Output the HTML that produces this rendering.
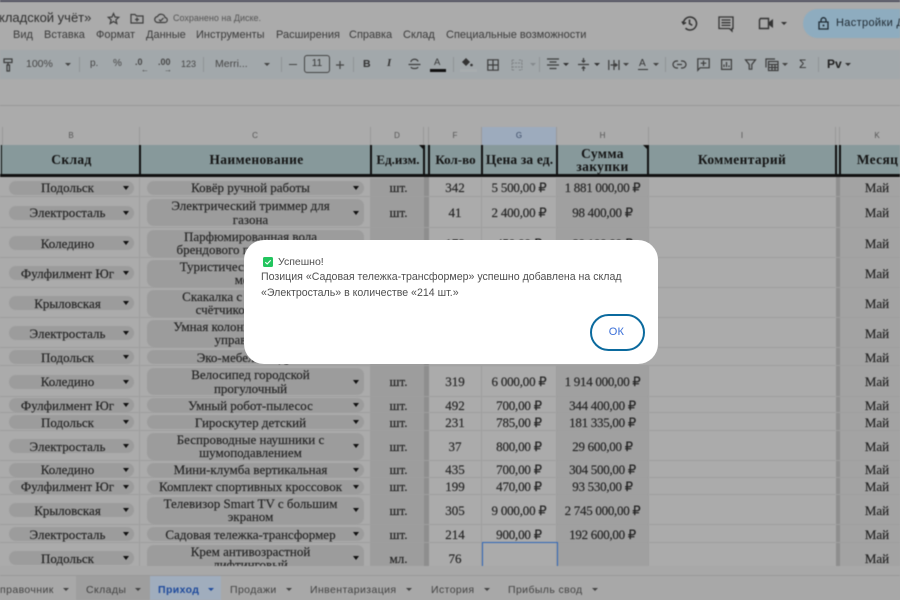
<!DOCTYPE html>
<html lang="ru">
<head>
<meta charset="utf-8">
<title>Складской учёт</title>
<style>
html,body{margin:0;padding:0;width:900px;height:600px;overflow:hidden;background:#ababab}
*{box-sizing:border-box}
#bg{position:absolute;left:0;top:0;width:900px;height:600px;overflow:hidden;filter:blur(.45px);font-family:"Liberation Sans",sans-serif;color:#3d3d3d}
.a{position:absolute;white-space:nowrap}
.m{font-size:11px;top:29px;color:#3a3a3a}
.t{font-size:10px;top:58px;color:#474747}
svg{position:absolute;overflow:visible}
.ic{fill:none;stroke:#3c3c3c;stroke-width:1.2}
.ch{top:127px;height:18px;font-size:8px;line-height:18px;text-align:center;color:#555;border-right:1px solid #999}
.hd{top:145px;height:32px;padding-top:1px;background:#87999b;border-right:2px solid #111;border-bottom:3px solid #111;font:bold 13.5px/13.5px "Liberation Serif",serif;color:#141414;display:flex;align-items:center;justify-content:center;text-align:center;letter-spacing:.35px}
.r{position:absolute;left:0;width:900px;border-bottom:1px solid #9e9e9e;font:13px/13.5px "Liberation Serif",serif;color:#222;-webkit-text-stroke:.15px #222}
.c{position:absolute;top:0;bottom:0;padding-top:1.5px;display:flex;align-items:center;justify-content:center;text-align:center;white-space:nowrap}
.b{left:2px;width:138px;border-right:1px solid #9e9e9e}
.n{left:140px;width:231px;border-right:1px solid #9e9e9e}
.d{left:371px;width:53px;padding-left:2px;background:#9d9d9d}
.f{left:429px;width:53px;border-right:1px solid #9e9e9e}
.g{left:482px;width:75px;border-right:1px solid #9e9e9e;letter-spacing:-.2px}
.h{left:557px;width:92px;background:#a0a0a0;border-right:1px solid #9e9e9e;letter-spacing:-.28px}
.k{left:840px;width:74px;background:#a3a3a3}
.p{position:relative;background:#9c9c9c;border-radius:7px;display:flex;align-items:center;justify-content:center;line-height:13.5px}
.b .p{width:125px;height:14px;padding-right:7px;margin-left:1px}
.n .p{width:217px;min-height:14px;padding:0 10px 0 0;margin-left:1px}
.p:after{content:"";position:absolute;right:5px;top:50%;margin-top:-2px;border:3.5px solid transparent;border-top:4px solid #111;border-bottom:0}
.tab{position:absolute;top:576px;height:24px;line-height:29px;font-size:10.5px;letter-spacing:.4px;color:#424242;white-space:nowrap;padding-left:10px}
.tab i{display:inline-block;margin-left:9px;border:3px solid transparent;border-top:3.5px solid #424242;border-bottom:0;vertical-align:2px}
#modal{position:absolute;left:244px;top:240px;width:414px;height:124px;background:#fff;border-radius:20px;font-family:"Liberation Sans",sans-serif;color:#505050;font-size:10.6px}
</style>
</head>
<body>
<div id="bg">
  <div class="a" style="left:0;top:0;width:900px;height:2px;background:#50505e"></div>

  <div class="a" style="left:-1px;top:10px;font-size:13px;color:#2e2e2e">кладской учёт»</div>
  <svg style="left:107px;top:12px" width="13" height="13" viewBox="0 0 13 13"><path class="ic" d="M6.5 1.5l1.5 3.5 3.7.3-2.8 2.5.9 3.7-3.3-2-3.3 2 .9-3.7L1.3 5.300l3.700-.3z"/></svg>
  <svg style="left:130px;top:13px" width="14" height="11" viewBox="0 0 14 11"><path class="ic" d="M1 1.500h4l1.500 1.500h6.500v7h-12z M7 4.500v4M5 6.500h4"/></svg>
  <svg style="left:154px;top:12px" width="14" height="12" viewBox="0 0 14 12"><path class="ic" d="M4 10.500a3 3 0 0 1-.5-6 4 4 0 0 1 7.500 1 2.500 2.500 0 0 1-.5 5z M5 7.500l1.500 1.500 3-3"/></svg>
  <div class="a" style="left:173px;top:13px;font-size:9px;color:#555">Сохранено на Диске.</div>

  <div class="a m" style="left:13px">Вид</div>
  <div class="a m" style="left:44px">Вставка</div>
  <div class="a m" style="left:96px">Формат</div>
  <div class="a m" style="left:146px">Данные</div>
  <div class="a m" style="left:196px">Инструменты</div>
  <div class="a m" style="left:276px">Расширения</div>
  <div class="a m" style="left:349px">Справка</div>
  <div class="a m" style="left:403px">Склад</div>
  <div class="a m" style="left:446px">Специальные возможности</div>

  <svg style="left:681px;top:15px" width="17" height="17" viewBox="0 0 17 17"><path d="M2.500 8.500a6.500 6.500 0 1 1 2 4.700 M1 6.500l1.500 2.500 2.500-1.500 M8.500 4.500v4.200l2.800 1.600" fill="none" stroke="#333" stroke-width="1.500"/></svg>
  <svg style="left:718px;top:16px" width="16" height="16" viewBox="0 0 16 16"><path d="M1 1h14v11.500h-1v2.500l-2.500-2.500H1z M3.500 4h9M3.500 6.700h9M3.500 9.400h9" fill="none" stroke="#333" stroke-width="1.300"/></svg>
  <svg style="left:758px;top:17px" width="16" height="13" viewBox="0 0 16 13"><path d="M2.500 1.500h8v10h-9v-8.500z" fill="none" stroke="#333" stroke-width="1.400"/><path d="M11 5l4-3v9l-4-3z" fill="#333"/></svg>
  <div class="a" style="left:781px;top:22px;border:3px solid transparent;border-top:3.500px solid #333;border-bottom:0"></div>
  <div class="a" style="left:803px;top:9px;width:110px;height:29px;border-radius:15px;background:#8eacbf"></div>
  <svg style="left:818px;top:17px" width="11" height="13" viewBox="0 0 11 13"><path d="M1 5h9v7H1z M3 5V3.200a2.500 2.500 0 0 1 5 0V5" fill="none" stroke="#1f2a33" stroke-width="1.300"/><circle cx="5.500" cy="8.500" r="1" fill="#1f2a33"/></svg>
  <div class="a" style="left:836px;top:17px;font-size:11px;color:#1f2a33;letter-spacing:.35px">Настройки Д</div>

  <div class="a" style="left:0;top:50px;width:900px;height:29px;background:#a2a8ab"></div>
  <svg style="left:3px;top:58px" width="11" height="14" viewBox="0 0 11 14"><path class="ic" d="M1 1h8v3.500H1z M5 4.500v2.500h-1v6h2.500v-6H5"/></svg>
  <div class="a t" style="left:26px;font-size:10.5px">100%</div>
  <div class="a" style="left:65px;top:63px;border:3px solid transparent;border-top:3.500px solid #444;border-bottom:0"></div>
  <div class="a" style="left:79px;top:57px;width:1px;height:15px;background:#8f9497"></div>
  <div class="a t" style="left:90px">р.</div>
  <div class="a t" style="left:113px">%</div>
  <div class="a t" style="left:135px;font-weight:bold;font-size:9px;top:57px">.0</div>
  <div class="a" style="left:141px;top:65px;font-size:8px;color:#444">←</div>
  <div class="a t" style="left:158px;font-weight:bold;font-size:9px;top:57px">.00</div>
  <div class="a" style="left:164px;top:65px;font-size:8px;color:#444">→</div>
  <div class="a t" style="left:181px;font-size:9px;top:59px">123</div>
  <div class="a" style="left:203px;top:57px;width:1px;height:15px;background:#8f9497"></div>
  <div class="a t" style="left:215px;font-size:10.5px">Merri...</div>
  <div class="a" style="left:264px;top:63px;border:3px solid transparent;border-top:3.500px solid #444;border-bottom:0"></div>
  <div class="a" style="left:281px;top:57px;width:1px;height:15px;background:#8f9497"></div>
  <div class="a" style="left:289px;top:64px;width:8px;height:1.200px;background:#444"></div>
  <div class="a" style="left:304px;top:55px;width:26px;height:18px;border:1px solid #444;border-radius:3px;text-align:center;font-size:10px;line-height:16px;color:#333">11</div>
  <svg style="left:335px;top:60px" width="10" height="10" viewBox="0 0 10 10"><path d="M1 5h8M5 1v8" stroke="#444" stroke-width="1.200"/></svg>
  <div class="a" style="left:353px;top:57px;width:1px;height:15px;background:#8f9497"></div>
  <div class="a" style="left:363px;top:58px;font:bold 10.5px 'Liberation Sans',sans-serif;color:#333">B</div>
  <div class="a" style="left:387px;top:57px;font:italic bold 11px 'Liberation Serif',serif;color:#333">I</div>
  <svg style="left:408px;top:58px" width="13" height="13" viewBox="0 0 13 13"><path class="ic" d="M3 4a3.500 2.500 0 0 1 7 -.5 M0.500 6.500h12 M3 9c.5 2 6.500 2 7 0"/></svg>
  <div class="a" style="left:434px;top:57px;font-size:9.5px;color:#333">A</div>
  <div class="a" style="left:430px;top:69px;width:16px;height:3px;background:#111"></div>
  <div class="a" style="left:453px;top:57px;width:1px;height:15px;background:#8f9497"></div>
  <svg style="left:460px;top:56px" width="13" height="12" viewBox="0 0 13 12"><path d="M2 6L6 2l4 4-4 4z" fill="#333"/><circle cx="11.500" cy="9" r="1.300" fill="#333"/></svg>
  <div class="a" style="left:460px;top:69px;width:17px;height:3px;background:#a8acae"></div>
  <svg style="left:487px;top:59px" width="12" height="12" viewBox="0 0 12 12"><path class="ic" d="M.8.800h10.400v10.400H.8z M6 .8v10.400 M.8 6h10.400"/></svg>
  <svg style="left:511px;top:59px" width="12" height="12" viewBox="0 0 12 12"><path d="M1 1h3M8 1h3M1 4h10M1 8h10M1 11h3M8 11h3M1 1v10M11 1v10" fill="none" stroke="#7f8385" stroke-width="1" stroke-dasharray="2 1"/></svg>
  <div class="a" style="left:530px;top:63px;border:3px solid transparent;border-top:3.500px solid #858a8d;border-bottom:0"></div>
  <div class="a" style="left:539px;top:57px;width:1px;height:15px;background:#8f9497"></div>
  <svg style="left:547px;top:58px" width="12" height="12" viewBox="0 0 12 12"><path class="ic" d="M0 1h12M2.500 4h7M0 7h12M2.500 10.500h7"/></svg>
  <div class="a" style="left:563px;top:63px;border:3px solid transparent;border-top:3.500px solid #333;border-bottom:0"></div>
  <svg style="left:578px;top:58px" width="11" height="13" viewBox="0 0 11 13"><path class="ic" d="M0 6.500h11 M5.500 0v4M3.800 2.500l1.700 1.700 1.700-1.700 M5.500 13V9M3.800 10.500l1.700-1.700 1.700 1.700"/></svg>
  <div class="a" style="left:594px;top:63px;border:3px solid transparent;border-top:3.500px solid #333;border-bottom:0"></div>
  <svg style="left:608px;top:59px" width="12" height="12" viewBox="0 0 12 12"><path class="ic" d="M.8 1v10M11 1v10M6 1v10M2.500 6H9M7 4.500L9 6l-2 1.500" stroke-width=".9"/></svg>
  <div class="a" style="left:623px;top:63px;border:3px solid transparent;border-top:3.500px solid #444;border-bottom:0"></div>
  <div class="a" style="left:639px;top:58px;font-size:10px;color:#333">A</div>
  <div class="a" style="left:638px;top:69px;width:10px;height:1.200px;background:#333"></div>
  <div class="a" style="left:653px;top:63px;border:3px solid transparent;border-top:3.500px solid #444;border-bottom:0"></div>
  <div class="a" style="left:665px;top:57px;width:1px;height:15px;background:#8f9497"></div>
  <svg style="left:673px;top:60px" width="13" height="9" viewBox="0 0 13 9"><path class="ic" d="M5 1H3.500a3.500 3.500 0 0 0 0 7H5M8 1h1.500a3.500 3.500 0 0 1 0 7H8M4 4.500h5"/></svg>
  <svg style="left:697px;top:58px" width="13" height="13" viewBox="0 0 13 13"><path class="ic" d="M.8.800h11.400v9H3l-2.200 2.500z M6.500 2.500v5.500M3.700 5.200h5.600"/></svg>
  <svg style="left:721px;top:59px" width="11" height="11" viewBox="0 0 11 11"><path class="ic" d="M.6.600h9.800v9.800H.6z M3 8V5.500M5.500 8V3M8 8V6.500"/></svg>
  <svg style="left:745px;top:59px" width="11" height="11" viewBox="0 0 11 11"><path class="ic" d="M.5.800h10L6.800 5.500v4.700H4.200V5.500z"/></svg>
  <svg style="left:765px;top:58px" width="14" height="13" viewBox="0 0 14 13"><path class="ic" d="M1 9.500V1h9 M3.500 3.500h9.500v9H3.500z M3.500 6.500h9.500M3.500 9.500h9.500M7 6.500v6M10 6.500v6"/></svg>
  <div class="a" style="left:782px;top:63px;border:3px solid transparent;border-top:3.500px solid #444;border-bottom:0"></div>
  <div class="a" style="left:799px;top:57px;font-size:12px;color:#333">Σ</div>
  <div class="a" style="left:818px;top:57px;width:1px;height:15px;background:#8f9497"></div>
  <div class="a" style="left:827px;top:57px;font-size:12px;font-weight:bold;color:#222">Рv</div>
  <div class="a" style="left:845px;top:63px;border:3px solid transparent;border-top:3.500px solid #333;border-bottom:0"></div>

  <div class="a" style="left:0;top:105px;width:900px;height:1px;background:#999"></div>

  <!-- column letters -->
  <div class="a ch" style="left:2px;width:138px;border-left:1px solid #999">B</div>
  <div class="a ch" style="left:140px;width:231px">C</div>
  <div class="a ch" style="left:371px;width:53px">D</div>
  <div class="a ch" style="left:424px;width:5px"></div>
  <div class="a ch" style="left:429px;width:53px">F</div>
  <div class="a ch" style="left:482px;width:75px;background:#9dabbd;color:#3a4a66">G</div>
  <div class="a ch" style="left:557px;width:92px">H</div>
  <div class="a ch" style="left:649px;width:187px">I</div>
  <div class="a ch" style="left:836px;width:4px"></div>
  <div class="a ch" style="left:840px;width:74px;border-right:0">K</div>

  <!-- header row -->
  <div class="a hd" style="left:0;width:2px;border-right:1px solid #111"></div>
  <div class="a hd" style="left:2px;width:139px;padding-left:2px">Склад</div>
  <div class="a hd" style="left:141px;width:231px;padding-left:2px">Наименование</div>
  <div class="a hd" style="left:372px;width:53px;letter-spacing:0;font-size:13px;padding-left:1px">Ед.изм.</div>
  <div class="a hd" style="left:425px;width:5px"></div>
  <div class="a hd" style="left:430px;width:53px;letter-spacing:0;font-size:13px">Кол-во</div>
  <div class="a hd" style="left:483px;width:75px;letter-spacing:.15px;font-size:13.5px">Цена за ед.</div>
  <div class="a hd" style="left:558px;width:91px">Сумма<br>закупки</div>
  <div class="a hd" style="left:649px;width:188px">Комментарий</div>
  <div class="a hd" style="left:837px;width:4px"></div>
  <div class="a hd" style="left:841px;width:73px;border-right:0">Месяц</div>
  <div class="a" style="left:419px;top:145px;border:2.500px solid transparent;border-top:2.500px solid #111;border-right:2.500px solid #111"></div>
  <div class="a" style="left:643px;top:145px;border:2.500px solid transparent;border-top:2.500px solid #111;border-right:2.500px solid #111"></div>

  <!-- rows -->
  <div class="a" style="left:424px;top:177px;width:5px;height:389px;background:#8e8e8e"></div>
  <div class="a" style="left:836px;top:177px;width:4px;height:389px;background:#8e8e8e"></div>

  <div class="r" style="top:178px;height:19px"><div class="c b"><div class="p">Подольск</div></div><div class="c n"><div class="p">Ковёр ручной работы</div></div><div class="c d">шт.</div><div class="c f">342</div><div class="c g">5 500,00 ₽</div><div class="c h">1 881 000,00 ₽</div><div class="c k">Май</div></div>
  <div class="r" style="top:197px;height:31px"><div class="c b"><div class="p">Электросталь</div></div><div class="c n"><div class="p" style="height:27px">Электрический триммер для<br>газона</div></div><div class="c d">шт.</div><div class="c f">41</div><div class="c g">2 400,00 ₽</div><div class="c h">98 400,00 ₽</div><div class="c k">Май</div></div>
  <div class="r" style="top:228px;height:30px"><div class="c b"><div class="p">Коледино</div></div><div class="c n"><div class="p" style="height:27px">Парфюмированная вола<br>брендового производителя</div></div><div class="c d">мл.</div><div class="c f">178</div><div class="c g">450,00 ₽</div><div class="c h">80 100,00 ₽</div><div class="c k">Май</div></div>
  <div class="r" style="top:258px;height:30px"><div class="c b"><div class="p">Фулфилмент Юг</div></div><div class="c n"><div class="p" style="height:27px">Туристический коврик на<br>месте</div></div><div class="c d">шт.</div><div class="c k">Май</div></div>
  <div class="r" style="top:288px;height:30px"><div class="c b"><div class="p">Крыловская</div></div><div class="c n"><div class="p" style="height:27px">Скакалка с электронным<br>счётчиком прыжков</div></div><div class="c d">шт.</div><div class="c k">Май</div></div>
  <div class="r" style="top:318px;height:30px"><div class="c b"><div class="p">Электросталь</div></div><div class="c n"><div class="p" style="height:27px">Умная колонка с голосовым<br>управлением</div></div><div class="c d">шт.</div><div class="c k">Май</div></div>
  <div class="r" style="top:348px;height:18px"><div class="c b"><div class="p">Подольск</div></div><div class="c n"><div class="p">Эко-мебель из дуба</div></div><div class="c d">шт.</div><div class="c k">Май</div></div>
  <div class="r" style="top:366px;height:31px"><div class="c b"><div class="p">Коледино</div></div><div class="c n"><div class="p" style="height:27px">Велосипед городской<br>прогулочный</div></div><div class="c d">шт.</div><div class="c f">319</div><div class="c g">6 000,00 ₽</div><div class="c h">1 914 000,00 ₽</div><div class="c k">Май</div></div>
  <div class="r" style="top:397px;height:16px"><div class="c b"><div class="p">Фулфилмент Юг</div></div><div class="c n"><div class="p">Умный робот-пылесос</div></div><div class="c d">шт.</div><div class="c f">492</div><div class="c g">700,00 ₽</div><div class="c h">344 400,00 ₽</div><div class="c k">Май</div></div>
  <div class="r" style="top:413px;height:18px"><div class="c b"><div class="p">Подольск</div></div><div class="c n"><div class="p">Гироскутер детский</div></div><div class="c d">шт.</div><div class="c f">231</div><div class="c g">785,00 ₽</div><div class="c h">181 335,00 ₽</div><div class="c k">Май</div></div>
  <div class="r" style="top:431px;height:30px"><div class="c b"><div class="p">Электросталь</div></div><div class="c n"><div class="p" style="height:27px">Беспроводные наушники с<br>шумоподавлением</div></div><div class="c d">шт.</div><div class="c f">37</div><div class="c g">800,00 ₽</div><div class="c h">29 600,00 ₽</div><div class="c k">Май</div></div>
  <div class="r" style="top:461px;height:17px"><div class="c b"><div class="p">Коледино</div></div><div class="c n"><div class="p">Мини-клумба вертикальная</div></div><div class="c d">шт.</div><div class="c f">435</div><div class="c g">700,00 ₽</div><div class="c h">304 500,00 ₽</div><div class="c k">Май</div></div>
  <div class="r" style="top:478px;height:17px"><div class="c b"><div class="p">Фулфилмент Юг</div></div><div class="c n"><div class="p">Комплект спортивных кроссовок</div></div><div class="c d">шт.</div><div class="c f">199</div><div class="c g">470,00 ₽</div><div class="c h">93 530,00 ₽</div><div class="c k">Май</div></div>
  <div class="r" style="top:495px;height:30px"><div class="c b"><div class="p">Крыловская</div></div><div class="c n"><div class="p" style="height:27px">Телевизор Smart TV с большим<br>экраном</div></div><div class="c d">шт.</div><div class="c f">305</div><div class="c g">9 000,00 ₽</div><div class="c h">2 745 000,00 ₽</div><div class="c k">Май</div></div>
  <div class="r" style="top:525px;height:18px"><div class="c b"><div class="p">Электросталь</div></div><div class="c n"><div class="p">Садовая тележка-трансформер</div></div><div class="c d">шт.</div><div class="c f">214</div><div class="c g">900,00 ₽</div><div class="c h">192 600,00 ₽</div><div class="c k">Май</div></div>
  <div class="r" style="top:543px;height:30px"><div class="c b"><div class="p">Подольск</div></div><div class="c n"><div class="p" style="height:27px">Крем антивозрастной<br>лифтинговый</div></div><div class="c d">мл.</div><div class="c f">76</div><div class="c g"></div><div class="c h"></div><div class="c k">Май</div></div>
  <div class="a" style="left:482px;top:542px;width:76px;height:30px;border:1.500px solid #2f67b8"></div>

  <!-- bottom -->
  <div class="a" style="left:0;top:566px;width:900px;height:34px;background:#a8a8a8"></div>
  <div class="a" style="left:0;top:575px;width:900px;height:1px;background:#999"></div>
  <div class="a" style="left:76px;top:576px;width:74px;height:24px;background:#9e9e9e"></div>
  <div class="a" style="left:150px;top:576px;width:71px;height:24px;background:#a0adbd"></div>
  <div class="tab" style="left:-10px">правочник<i></i></div>
  <div class="tab" style="left:76px">Склады<i></i></div>
  <div class="tab" style="left:148px;color:#1e4a9c;font-weight:bold">Приход<i style="border-top-color:#1e4a9c"></i></div>
  <div class="tab" style="left:220px">Продажи<i></i></div>
  <div class="tab" style="left:300px">Инвентаризация<i></i></div>
  <div class="tab" style="left:421px">История<i></i></div>
  <div class="tab" style="left:498px">Прибыль свод<i></i></div>
</div>

<div id="modal">
  <svg style="left:19px;top:17px" width="10" height="10" viewBox="0 0 10 10"><rect width="10" height="10" rx="1.500" fill="#22c55e"/><path d="M2.300 5.200l1.900 1.800 3.500-3.800" fill="none" stroke="#fff" stroke-width="1.100"/></svg>
  <div class="a" style="left:34px;top:16px;font-size:10.5px;line-height:12px">Успешно!</div>
  <div class="a" style="left:17px;top:30px;line-height:15.5px">Позиция «Садовая тележка-трансформер» успешно добавлена на склад<br>«Электросталь» в количестве «214 шт.»</div>
  <div class="a" style="left:346px;top:74px;width:55px;height:37px;border:2.500px solid #0b6a9e;border-radius:19px;text-align:center;line-height:32px;font-size:11px;color:#3a6fd8;letter-spacing:.3px;padding-right:2px">ОК</div>
</div>
</body>
</html>
